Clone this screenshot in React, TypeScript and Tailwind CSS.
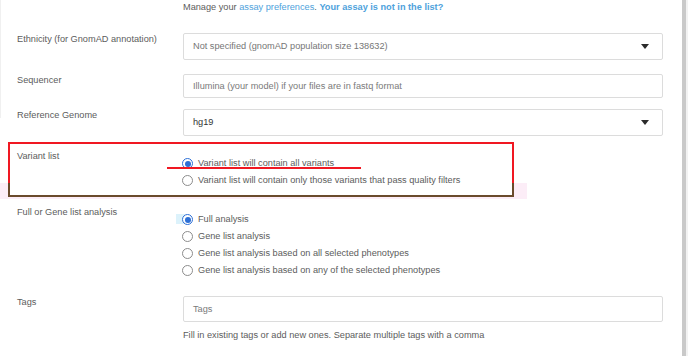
import React from "react";

function Radio({ checked }: { checked?: boolean }) {
  return checked ? (
    <span className="w-[11px] h-[11px] rounded-full border border-[#2c6fd6] bg-white flex items-center justify-center shrink-0">
      <span className="w-[6px] h-[6px] rounded-full bg-[#2c6fd6]" />
    </span>
  ) : (
    <span className="w-[11px] h-[11px] rounded-full border border-[#8c8c8c] bg-white shrink-0" />
  );
}

function RadioRow({ checked, label }: { checked?: boolean; label: string }) {
  return (
    <div className="h-[17px] flex items-center gap-[5px] ml-[-1px]">
      <Radio checked={checked} />
      <span>{label}</span>
    </div>
  );
}

function Caret() {
  return (
    <svg width="8" height="5" viewBox="0 0 8 5" className="shrink-0">
      <path d="M0 0 L8 0 L4 5 Z" fill="#2b2b2b" />
    </svg>
  );
}

export default function App() {
  return (
    <div className="relative w-[688px] h-[356px] overflow-hidden bg-white text-[#5c5c5c] text-[9.2px] leading-[13px] font-['Liberation_Sans',Arial,sans-serif]">
      {/* annotation background layers */}
      <div className="absolute left-0 top-[183px] w-[527px] h-[16px] bg-[#fcedf7]" />
      <div className="absolute left-[8px] top-[142px] w-[506px] h-[55px] border-2 border-[#f01822] bg-white" />
      <div className="absolute left-[8px] top-[183px] w-[506px] h-[14px] border-l-2 border-r-2 border-b-2 border-[#6a4a2c]" />
      <div className="absolute left-0 top-0 w-[1px] h-[118px] bg-[#f0f0f0]" />

      <div className="relative flex flex-col pl-[17px] pr-[25px]">
        {/* Manage row */}
        <div className="flex pt-[1px]">
          <div className="w-[166px] shrink-0" />
          <div>
            Manage your <span className="text-[#4ea2dc]">assay preferences</span>.{" "}
            <span className="text-[#4ea2dc] font-bold">Your assay is not in the list?</span>
          </div>
        </div>

        {/* Ethnicity */}
        <div className="flex mt-[19px]">
          <div className="w-[166px] shrink-0 pt-[0px]">Ethnicity (for GnomAD annotation)</div>
          <div className="flex-1 h-[27px] border border-[#dcdcdc] rounded-[2px] flex items-center justify-between pl-[9px] pr-[13px] text-[#767676]">
            <span>Not specified (gnomAD population size 138632)</span>
            <Caret />
          </div>
        </div>

        {/* Sequencer */}
        <div className="flex mt-[14px]">
          <div className="w-[166px] shrink-0">Sequencer</div>
          <div className="flex-1 h-[24px] border border-[#dcdcdc] rounded-[2px] flex items-center pl-[9px] text-[#7a7a7a]">
            Illumina (your model) if your files are in fastq format
          </div>
        </div>

        {/* Reference Genome */}
        <div className="flex mt-[11px]">
          <div className="w-[166px] shrink-0">Reference Genome</div>
          <div className="flex-1 h-[27px] border border-[#dcdcdc] rounded-[2px] flex items-center justify-between pl-[9px] pr-[13px] text-[#333]">
            <span>hg19</span>
            <Caret />
          </div>
        </div>

        {/* Variant list */}
        <div className="flex mt-[14px]">
          <div className="w-[166px] shrink-0">Variant list</div>
          <div className="flex-1 pt-[5px]">
            <RadioRow checked label="Variant list will contain all variants" />
            <RadioRow label="Variant list will contain only those variants that pass quality filters" />
          </div>
        </div>

        {/* Full or gene list */}
        <div className="flex mt-[17px]">
          <div className="w-[166px] shrink-0">Full or Gene list analysis</div>
          <div className="flex-1 pt-[5px] relative">
            <div className="absolute left-[-7px] top-[8px] w-[9px] h-[10px] bg-[#dcf2fb]" />
            <div className="relative">
              <RadioRow checked label="Full analysis" />
              <RadioRow label="Gene list analysis" />
              <RadioRow label="Gene list analysis based on all selected phenotypes" />
              <RadioRow label="Gene list analysis based on any of the selected phenotypes" />
            </div>
          </div>
        </div>

        {/* Tags */}
        <div className="flex mt-[17px]">
          <div className="w-[166px] shrink-0">Tags</div>
          <div className="flex-1">
            <div className="h-[26px] border border-[#dcdcdc] rounded-[2px] flex items-center pl-[9px] text-[#7a7a7a]">
              Tags
            </div>
            <div className="mt-[7px]">Fill in existing tags or add new ones. Separate multiple tags with a comma</div>
          </div>
        </div>
      </div>

      {/* red underline annotation */}
      <div className="absolute left-[167px] top-[167px] w-[194px] h-[2px] bg-[#f01822]" />

      {/* scrollbar */}
      <div className="absolute left-[682px] top-0 w-[4px] h-full bg-[#c9c9c9]" />
      <div className="absolute left-[686px] top-0 w-[2px] h-full bg-[#f2f2f2]" />
    </div>
  );
}
